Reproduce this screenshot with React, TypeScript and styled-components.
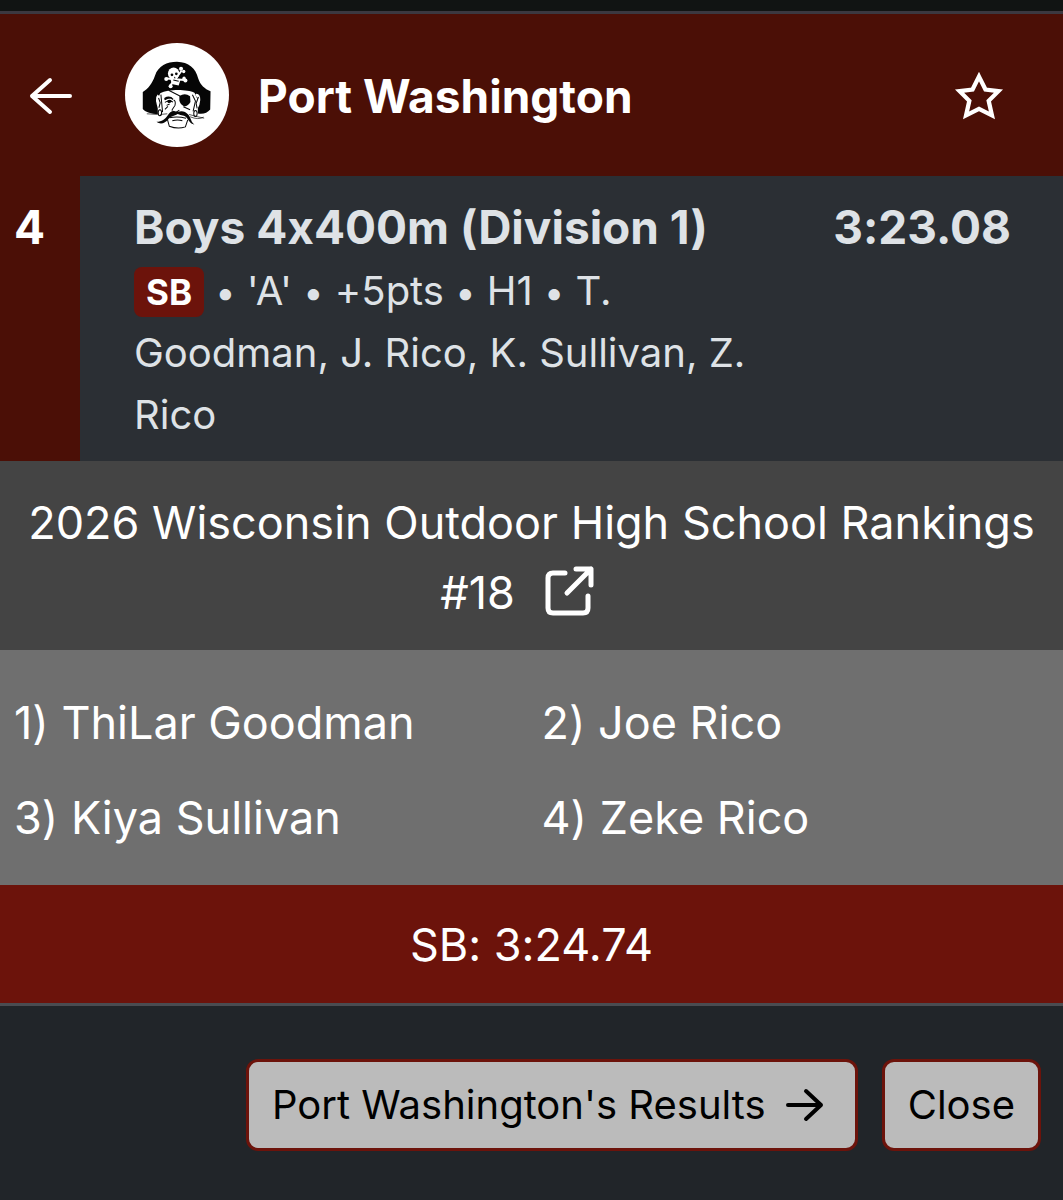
import React from "react";
import styled, { createGlobalStyle } from "styled-components";

const GlobalStyle = createGlobalStyle`
  *, *::before, *::after { box-sizing: border-box; }
  html { background: #212529; }
  body {
    margin: 0;
    font-family: Inter, "Liberation Sans", sans-serif;
    font-variant-ligatures: no-contextual;
    color: #fff;
  }
  h1, h2, p, ol { margin: 0; padding: 0; }
`;

const Page = styled.div`
  min-height: 100vh;
  display: flex;
  flex-direction: column;
  background: #212529;
`;

const Backdrop = styled.div`
  height: 14px;
  background: #111413;
  border-bottom: 3px solid #3b3840;
`;

const Header = styled.header`
  display: flex;
  align-items: center;
  padding: 28px 56px 28px 28px;
  background: #4b0f06;
`;

const IconButton = styled.button`
  display: flex;
  padding: 2px 0 0;
  border: 0;
  background: none;
  color: #fff;
  cursor: pointer;
`;

const Badge = styled.svg`
  width: 106px;
  height: 106px;
  margin: 0 28px 0 50px;
  flex: none;
`;

const Team = styled.h1`
  flex: 1;
  font-size: 46px;
  line-height: 60px;
  font-weight: 700;

  && { padding-top: 2px; }
`;

const Result = styled.section`
  display: flex;
  background: #2b2f34;
  color: #dee2e6;
`;

const Place = styled.div`
  flex: none;
  width: 80px;
  padding: 21px 14px;
  background: #4b0f06;
  color: #fff;
  font-size: 46px;
  line-height: 60px;
  font-weight: 700;
`;

const ResultBody = styled.div`
  flex: 1;
  display: flex;
  justify-content: space-between;
  gap: 48px;
  padding: 21px 52px 15px 54px;
`;

const Event = styled.div`
  flex: 1;
`;

const EventName = styled.h2`
  font-size: 46px;
  line-height: 60px;
  font-weight: 700;
  white-space: nowrap;
`;

const Meta = styled.p`
  font-size: 40px;
  line-height: 62px;

  && { padding-top: 3px; }
`;

const Tag = styled.span`
  display: inline-block;
  padding: 0 12px;
  border-radius: 8px;
  background: #6c130b;
  color: #fff;
  font-size: 35px;
  line-height: 50px;
  font-weight: 700;
`;

const Dot = styled.span`
  font-size: 36px;
  line-height: 1;
`;

const Time = styled.div`
  font-size: 46px;
  line-height: 60px;
  font-weight: 700;
`;

const Ranking = styled.section`
  padding: 27px 16px 22px;
  background: #444;
  font-size: 45px;
  line-height: 70px;
  text-align: center;
`;

const RankLink = styled.a`
  margin: 0 28px;
  color: inherit;

  svg { vertical-align: -8px; }
`;

const Runners = styled.ol`
  display: grid;
  grid-template-columns: 1fr 1fr;
  column-gap: 20px;
  background: #6f6f6f;
  list-style: none;
  font-size: 45px;
  line-height: 95px;

  && { padding: 25px 14px 20px; }
`;

const SeasonBest = styled.p`
  background: #6c130b;
  border-bottom: 3px solid #4a4c51;
  font-size: 45px;
  line-height: 116px;
  text-align: center;

  && { padding-top: 2px; }
`;

const Footer = styled.footer`
  display: flex;
  justify-content: flex-end;
  gap: 24px;
  padding: 53px 22px;
`;

const Button = styled.button`
  display: flex;
  align-items: center;
  gap: 20px;
  padding: 15px 23px;
  border: 3px solid #6c130b;
  border-radius: 12px;
  background: #bbb;
  color: #000;
  font: inherit;
  font-size: 40px;
  line-height: 56px;
  white-space: nowrap;
  cursor: pointer;

  svg { margin-right: 8px; }
`;

const PirateBadge = () => (
  <Badge viewBox="42 37 316 316" role="img" aria-label="Port Washington Pirates">
    <circle cx="200" cy="195" r="155" fill="#fff" />
    <path
      d="M98 186 C116 174 126 160 134 138 C144 108 170 96 200 96 C235 97 256 116 263 145 C270 166 282 176 300 184 L299 238 C290 248 279 253 262 250 L262 210 L252 188 C230 178 174 177 150 190 L142 208 L143 252 C124 252 107 247 98 237 Z"
      fill="#060606"
    />
    <g fill="#fff">
      <ellipse cx="190" cy="131" rx="17" ry="18" />
      <path d="M180 144 L210 150 L205 167 L184 162 Z" />
      <circle cx="212" cy="117" r="6" /><circle cx="220" cy="125" r="5" />
      <circle cx="225" cy="152" r="6" /><circle cx="221" cy="145" r="5" />
      <circle cx="168" cy="147" r="6" /><circle cx="181" cy="169" r="6" />
    </g>
    <path d="M180 166 L195 148 L214 122 M169 146 L222 150" stroke="#fff" strokeWidth="6" />
    <g fill="#060606">
      <circle cx="185" cy="135" r="4" /><circle cx="198" cy="132" r="4" />
      <path d="M193 140 l3 5 h-5z" />
    </g>
    <path d="M189 150 L205 154" stroke="#060606" strokeWidth="3" />
    <path d="M152 191 C175 180 231 180 253 191 L256 246 L240 268 L223 291 C205 296 190 294 179 289 L171 267 L152 250 Z" fill="#fff" />
    <path d="M145 196 C137 204 143 224 150 241 M256 196 C270 192 267 222 256 238" fill="none" stroke="#fff" strokeWidth="8" />
    <g fill="none" stroke="#060606" strokeWidth="3">
      <path d="M152 194 L157 246 M175 181 L213 200 M246 194 L255 213 L248 244" />
      <path d="M145 204 L150 218 L146 233 M264 201 L257 220 L260 235" />
      <path d="M163 208 C171 200 181 201 188 209 M164 217 Q175 209 188 216 M190 210 Q197 213 194 226 L185 240" />
      <path d="M169 226 L178 222 M164 238 L173 229 M219 230 L239 239" />
      <path d="M184 242 L197 247 L207 240 M177 263 Q201 258 227 264 M186 272 Q202 267 216 272" />
      <path d="M171 266 L177 288 Q202 298 225 290 L232 269" />
      <path d="M110 251 L143 253 M150 253 L171 251 M236 253 L262 260 L281 264 M239 260 Q264 270 279 261" strokeWidth="2" />
      <ellipse cx="149" cy="248" rx="5" ry="9" /><ellipse cx="255" cy="250" rx="5" ry="9" />
    </g>
    <path d="M207 199 Q223 187 239 199 L240 216 Q234 228 222 229 Q209 224 207 211 Z" fill="#060606" />
    <path d="M162 204 Q178 194 190 207 Q176 202 164 211 Z M170 213 Q178 206 185 213 Q181 221 173 218 Z" fill="#060606" />
    <path d="M194 244 C184 242 178 247 172 256 C165 267 155 274 139 275 C151 284 165 279 174 267 C182 258 191 259 202 252 C214 257 222 255 230 264 C235 272 242 282 252 283 C242 277 242 264 234 254 C224 241 212 242 202 245 Z" fill="#060606" />
  </Badge>
);

const BackArrow = () => (
  <svg width="46" height="46" viewBox="0 0 46 46" fill="none" stroke="currentColor" strokeWidth="4" strokeLinecap="round" strokeLinejoin="round" aria-hidden="true">
    <path d="M42 23 H4 M22 7 L4 23 L22 39" />
  </svg>
);

const Star = () => (
  <svg width="56" height="56" viewBox="0 0 52 52" fill="none" stroke="currentColor" strokeWidth="4" strokeMiterlimit="10" aria-hidden="true">
    <path d="M26 8 L32 20 L44 21.500 L35 30.500 L38 44 L26 38 L14 44 L17 30.500 L8 21.500 L20 20 Z" />
  </svg>
);

const ExternalLink = () => (
  <svg width="52" height="52" viewBox="0 0 52 52" fill="none" stroke="currentColor" strokeWidth="5" strokeLinecap="round" strokeLinejoin="round" aria-hidden="true">
    <path d="M22 8 H10 Q5 8 5 13 V43 Q5 48 10 48 H40 Q45 48 45 43 V31 M33 4 H48 V20 M48 4 L24 28" />
  </svg>
);

const ForwardArrow = () => (
  <svg width="38" height="38" viewBox="0 0 38 38" fill="none" stroke="currentColor" strokeWidth="4" strokeLinecap="round" strokeLinejoin="round" aria-hidden="true">
    <path d="M2 19 H35 M20 5 L35 19 L20 33" />
  </svg>
);

const details = ["'A'", "+5pts", "H1", "T. Goodman, J. Rico, K. Sullivan, Z. Rico"];
const runners = ["ThiLar Goodman", "Joe Rico", "Kiya Sullivan", "Zeke Rico"];

export default function App() {
  return (
    <Page>
      <GlobalStyle />
      <Backdrop />
      <Header>
        <IconButton type="button" aria-label="Back"><BackArrow /></IconButton>
        <PirateBadge />
        <Team>Port Washington</Team>
        <IconButton type="button" aria-label="Add to favorites"><Star /></IconButton>
      </Header>
      <main>
        <Result>
          <Place>4</Place>
          <ResultBody>
            <Event>
              <EventName>Boys 4x400m (Division 1)</EventName>
              <Meta>
                <Tag>SB</Tag>
                {details.map((detail) => (
                  <React.Fragment key={detail}> <Dot>•</Dot> {detail}</React.Fragment>
                ))}
              </Meta>
            </Event>
            <Time>3:23.08</Time>
          </ResultBody>
        </Result>
        <Ranking>
          2026 Wisconsin Outdoor High School Rankings #18
          <RankLink href="#rankings" aria-label="Open rankings"><ExternalLink /></RankLink>
        </Ranking>
        <Runners>
          {runners.map((name, i) => <li key={name}>{i + 1}) {name}</li>)}
        </Runners>
        <SeasonBest>SB: 3:24.74</SeasonBest>
      </main>
      <Footer>
        <Button type="button">Port Washington's Results <ForwardArrow /></Button>
        <Button type="button">Close</Button>
      </Footer>
    </Page>
  );
}
